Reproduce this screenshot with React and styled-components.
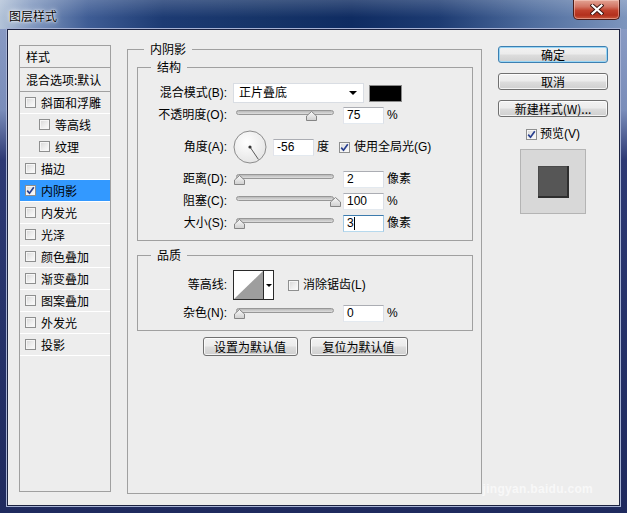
import React from 'react'
import styled, { createGlobalStyle } from 'styled-components'

const ui = `"Liberation Sans", "Noto Sans CJK SC", sans-serif`

const GlobalStyle = createGlobalStyle`
  html, body { margin: 0; padding: 0; background: #fff; }
  body { font-family: ${ui}; font-size: 12px; color: #000; }
`

const Window = styled.div`
  position: relative;
  width: 627px;
  height: 513px;
  box-sizing: border-box;
  padding: 0 7px 7px;
  display: flex;
  flex-direction: column;
  overflow: hidden;
  background: linear-gradient(180deg, #8d9ec6 0px, #7a8dba 110px, #2d3974 160px, #243067 70%, #1f2a5e 100%);
`

const TitleBar = styled.div`
  height: 29px;
  margin: 0 -7px;
  padding: 0 7px 0 9px;
  display: flex;
  justify-content: space-between;
  align-items: flex-start;
  background:
    linear-gradient(180deg, rgba(255, 255, 255, 0.18), rgba(255, 255, 255, 0) 60%),
    linear-gradient(90deg, #b3c3d8 0%, #8198bf 5%, #3f5d95 14%, #1d3b73 26%, #163468 42%, #0f2c62 56%, #1d3b72 70%, #4f6d9e 85%, #7d95bd 100%);
`

const Title = styled.span`
  margin-top: 8px;
  font-family: "Noto Sans CJK SC", sans-serif;
  font-size: 12px;
  line-height: 15px;
  color: #000;
  text-shadow: 0 0 6px #fff, 0 0 3px #fff, 0 0 1px #fff;
`

const CloseButton = styled.div`
  width: 47px;
  height: 20px;
  box-sizing: border-box;
  display: flex;
  align-items: center;
  justify-content: center;
  border: 1px solid #4a1c18;
  border-top: 0;
  border-radius: 0 0 5px 5px;
  background: linear-gradient(180deg, #e3a494 0%, #d27564 35%, #c0412c 55%, #b3301c 80%, #c85a3f 100%);
  box-shadow: inset 0 0 0 1px rgba(255, 220, 210, 0.45);
`

const Client = styled.div`
  flex: 1;
  box-sizing: border-box;
  background: #ededed;
  border: 1px solid #1b2240;
  box-shadow: 0 0 0 1px #a6b2d4;
  padding: 12px 0 0 11px;
  display: grid;
  grid-template-columns: 92px 355px 110px;
  column-gap: 16px;
  align-items: start;
`

/* left style list */
const StyleList = styled.div`
  margin-top: 3px;
  height: 447px;
  box-sizing: border-box;
  border: 1px solid #a0a0a0;
  font-family: "Noto Sans CJK SC", sans-serif;
`

const ListHead = styled.div`
  height: ${p => p.$h}px;
  border-bottom: 1px solid #a0a0a0;
  padding-left: 6px;
  display: flex;
  align-items: center;
  line-height: 14px;
  white-space: nowrap;
`

const ListItem = styled.div`
  height: 21px;
  border-bottom: 1px solid #fff;
  padding-left: ${p => (p.$indent ? 19 : 5)}px;
  display: flex;
  align-items: center;
  gap: 5px;
  line-height: 14px;
  background: ${p => (p.$active ? '#3399ff' : 'transparent')};
`

const Box = styled.span`
  width: 11px;
  height: 11px;
  box-sizing: border-box;
  flex: none;
  display: inline-flex;
  align-items: center;
  justify-content: center;
  border: 1px solid #8e8f8f;
  background: linear-gradient(135deg, #d6d6d6 0%, #eeeeee 55%, #fdfdfd 100%);
  box-shadow: inset 0 0 0 1px #f6f6f6;
`

const Check = ({ checked }) => (
  <Box>
    {checked && (
      <svg width="9" height="9" viewBox="0 0 9 9">
        <path d="M1.2 4.6 L3.5 7.2 L7.8 1.3" fill="none" stroke="#283f8f" strokeWidth="1.7" />
      </svg>
    )}
  </Box>
)

/* main panel */
const Group = styled.fieldset`
  margin: ${p => p.$mt || 0}px 0 0;
  min-width: 0;
  box-sizing: border-box;
  border: 1px solid #a0a0a0;
  padding: ${p => p.$pad};
  height: ${p => (p.$h ? `${p.$h}px` : 'auto')};
`

const Legend = styled.legend`
  margin-left: ${p => p.$ml}px;
  padding: 0 6px;
  font-family: "Noto Sans CJK SC", sans-serif;
  font-size: 12px;
  line-height: 14px;
`

const Row = styled.div`
  height: ${p => p.$h}px;
  display: grid;
  grid-template-columns: 89px auto;
  column-gap: 6px;
  align-items: center;
`

const Label = styled.span`
  text-align: right;
  line-height: 14px;
  white-space: nowrap;
`

const Controls = styled.div`
  display: flex;
  align-items: center;
  gap: 6px;
`

const Select = styled.div`
  width: 131px;
  height: 20px;
  box-sizing: border-box;
  border: 1px solid #d9dde3;
  background: #fff;
  padding: 0 6px 0 5px;
  display: flex;
  align-items: center;
  justify-content: space-between;
  line-height: 14px;
`

const DownArrow = styled.span`
  width: 0;
  height: 0;
  border-left: 4px solid transparent;
  border-right: 4px solid transparent;
  border-top: 4px solid #000;
`

const Swatch = styled.div`
  margin-left: -1px;
  width: 33px;
  height: 17px;
  box-sizing: border-box;
  border: 1px solid #8a8a8a;
  background: #000;
`

const SliderWrap = styled.div`
  position: relative;
  width: 104px;
  height: 12px;
`

const Track = styled.div`
  margin: 1px 3px 0;
  height: 5px;
  box-sizing: border-box;
  border: 1px solid #979797;
  border-radius: 3px;
  background: linear-gradient(180deg, #b9b9b9, #dedede);
`

const Thumb = styled.div`
  position: absolute;
  top: 2px;
  width: 11px;
  height: 10px;
  line-height: 0;
`

const Slider = ({ at }) => (
  <SliderWrap>
    <Track />
    <Thumb style={{ left: `${0.5 + at * 96}px` }}>
      <svg width="11" height="10" viewBox="0 0 11 10">
        <defs>
          <linearGradient id="th" x1="0" y1="0" x2="0" y2="1">
            <stop offset="0" stopColor="#fafafa" />
            <stop offset="1" stopColor="#cfcfcf" />
          </linearGradient>
        </defs>
        <path d="M0.5 9.5 V5 L5.5 0.5 L10.5 5 V9.5 Z" fill="url(#th)" stroke="#858585" />
      </svg>
    </Thumb>
  </SliderWrap>
)

const Field = styled.div`
  width: 41px;
  height: 17px;
  box-sizing: border-box;
  border: 1px solid;
  border-color: ${p => (p.$focus ? '#3d7bad #a4c9e3 #b7d9ed #a4c9e3' : '#abadb3 #dbdfe6 #e3e9ef #e2e3ea')};
  background: #fff;
  padding-left: 3px;
  display: flex;
  align-items: center;
  font-family: "Liberation Sans", sans-serif;
  font-size: 12px;
`

const Caret = styled.span`
  width: 1px;
  height: 13px;
  background: #000;
`

const Unit = styled.span`
  margin-left: -3px;
  line-height: 14px;
  white-space: nowrap;
`

const CheckLabel = styled.span`
  margin-left: ${p => p.$ml || 0}px;
  display: inline-flex;
  align-items: center;
  gap: 4px;
  line-height: 14px;
  white-space: nowrap;
`

const ContourBox = styled.div`
  width: 41px;
  height: 30px;
  box-sizing: border-box;
  border: 1px solid #2a2a2a;
  background: #fff;
  display: flex;
`

const ContourArrow = styled.div`
  flex: 1;
  border-left: 1px solid #2a2a2a;
  display: flex;
  align-items: center;
  justify-content: center;
  &::after {
    content: '';
    border-left: 3px solid transparent;
    border-right: 3px solid transparent;
    border-top: 3px solid #000;
  }
`

const ButtonRow = styled.div`
  margin-top: 6px;
  display: flex;
  justify-content: center;
  gap: 12px;
`

const Button = styled.div`
  width: ${p => p.$w}px;
  height: ${p => p.$h}px;
  box-sizing: border-box;
  border: 1px solid ${p => (p.$default ? '#3c7fb1' : '#707070')};
  border-radius: 3px;
  background: linear-gradient(180deg, #f2f2f2 0%, #ebebeb 49%, #dddddd 51%, #cfcfcf 100%);
  box-shadow: inset 0 0 0 1px ${p => (p.$default ? '#9ad6f5' : 'rgba(255, 255, 255, 0.75)')};
  display: flex;
  align-items: center;
  justify-content: center;
  font-family: "Noto Sans CJK SC", sans-serif;
  font-size: 12px;
  line-height: 14px;
  white-space: nowrap;
`

/* right column */
const Side = styled.div`
  margin-top: 4px;
  display: flex;
  flex-direction: column;
  align-items: center;
  gap: 10px;
`

const PreviewToggle = styled.div`
  height: 14px;
  display: flex;
  align-items: center;
  gap: 3px;
  line-height: 14px;
`

const PreviewBox = styled.div`
  margin-top: -2px;
  width: 66px;
  height: 65px;
  box-sizing: border-box;
  border: 1px solid #b4b4b4;
  background: #d8d8d8;
  display: flex;
  align-items: center;
  justify-content: center;
`

const PreviewSwatch = styled.div`
  width: 31px;
  height: 32px;
  background: #565656;
  box-shadow: inset -2px -2px 0 #2e2e2e, inset 1px 1px 0 #4a4a4a;
`

const Watermark = styled.span`
  position: absolute;
  right: 34px;
  bottom: 17px;
  font-family: "Liberation Sans", sans-serif;
  font-size: 12px;
  font-weight: bold;
  color: #f8f8f8;
  letter-spacing: 0.3px;
`

const Dial = () => (
  <svg width="34" height="34" viewBox="0 0 34 34">
    <defs>
      <radialGradient id="dial" cx="0.4" cy="0.35" r="0.7">
        <stop offset="0" stopColor="#ffffff" />
        <stop offset="1" stopColor="#e4e4e4" />
      </radialGradient>
    </defs>
    <circle cx="17" cy="17" r="16" fill="url(#dial)" stroke="#8c8c8c" />
    <line x1="17" y1="17" x2="25.4" y2="29.4" stroke="#5a5a5a" strokeWidth="1" />
    <circle cx="17" cy="17" r="1.6" fill="#333" />
  </svg>
)

const CloseGlyph = () => (
  <svg width="14" height="11" viewBox="0 0 14 11">
    <path d="M2.5 1.5 L11.5 9.5 M11.5 1.5 L2.5 9.5" stroke="#3a1410" strokeWidth="4" strokeLinecap="square" />
    <path d="M2.5 1.5 L11.5 9.5 M11.5 1.5 L2.5 9.5" stroke="#fff" strokeWidth="2.2" strokeLinecap="square" />
  </svg>
)

const effects = [
  { name: '斜面和浮雕' },
  { name: '等高线', indent: true },
  { name: '纹理', indent: true },
  { name: '描边' },
  { name: '内阴影', checked: true, active: true },
  { name: '内发光' },
  { name: '光泽' },
  { name: '颜色叠加' },
  { name: '渐变叠加' },
  { name: '图案叠加' },
  { name: '外发光' },
  { name: '投影' },
]

export default function App() {
  return (
    <>
      <GlobalStyle />
      <Window>
        <TitleBar>
          <Title>图层样式</Title>
          <CloseButton>
            <CloseGlyph />
          </CloseButton>
        </TitleBar>

        <Client>
          <StyleList>
            <ListHead $h={21}>样式</ListHead>
            <ListHead $h={23}>混合选项:默认</ListHead>
            {effects.map(e => (
              <ListItem key={e.name} $indent={e.indent} $active={e.active}>
                <Check checked={e.checked} />
                <span>{e.name}</span>
              </ListItem>
            ))}
          </StyleList>

          <Group $pad="4px 8px 0 9px" $h={452}>
            <Legend $ml={7}>内阴影</Legend>

            <Group $pad="8px 0 6px 0">
              <Legend $ml={13}>结构</Legend>
              <Row $h={22}>
                <Label>混合模式(B):</Label>
                <Controls>
                  <Select>
                    <span>正片叠底</span>
                    <DownArrow />
                  </Select>
                  <Swatch />
                </Controls>
              </Row>
              <Row $h={22}>
                <Label>不透明度(O):</Label>
                <Controls>
                  <Slider at={0.75} />
                  <Field>75</Field>
                  <Unit>%</Unit>
                </Controls>
              </Row>
              <Row $h={42}>
                <Label>角度(A):</Label>
                <Controls>
                  <Dial />
                  <Field>-56</Field>
                  <Unit>度</Unit>
                  <CheckLabel $ml={4}>
                    <Check checked />
                    使用全局光(G)
                  </CheckLabel>
                </Controls>
              </Row>
              <Row $h={22}>
                <Label>距离(D):</Label>
                <Controls>
                  <Slider at={0} />
                  <Field>2</Field>
                  <Unit>像素</Unit>
                </Controls>
              </Row>
              <Row $h={22}>
                <Label>阻塞(C):</Label>
                <Controls>
                  <Slider at={1} />
                  <Field>100</Field>
                  <Unit>%</Unit>
                </Controls>
              </Row>
              <Row $h={22}>
                <Label>大小(S):</Label>
                <Controls>
                  <Slider at={0} />
                  <Field $focus>
                    3<Caret />
                  </Field>
                  <Unit>像素</Unit>
                </Controls>
              </Row>
            </Group>

            <Group $mt={7} $pad="6px 0 6px 0">
              <Legend $ml={13}>品质</Legend>
              <Row $h={34}>
                <Label>等高线:</Label>
                <Controls>
                  <ContourBox>
                    <svg width="29" height="28" viewBox="0 0 29 28">
                      <path d="M0 28 L29 0 L29 28 Z" fill="#9e9e9e" />
                    </svg>
                    <ContourArrow />
                  </ContourBox>
                  <CheckLabel $ml={8}>
                    <Check />
                    消除锯齿(L)
                  </CheckLabel>
                </Controls>
              </Row>
              <Row $h={22}>
                <Label>杂色(N):</Label>
                <Controls>
                  <Slider at={0} />
                  <Field>0</Field>
                  <Unit>%</Unit>
                </Controls>
              </Row>
            </Group>

            <ButtonRow>
              <Button $w={95} $h={19}>设置为默认值</Button>
              <Button $w={98} $h={19}>复位为默认值</Button>
            </ButtonRow>
          </Group>

          <Side>
            <Button $w={110} $h={17} $default>确定</Button>
            <Button $w={110} $h={17}>取消</Button>
            <Button $w={110} $h={17}>新建样式(W)...</Button>
            <PreviewToggle>
              <Check checked />
              预览(V)
            </PreviewToggle>
            <PreviewBox>
              <PreviewSwatch />
            </PreviewBox>
          </Side>
        </Client>

        <Watermark>jingyan.baidu.com</Watermark>
      </Window>
    </>
  )
}
